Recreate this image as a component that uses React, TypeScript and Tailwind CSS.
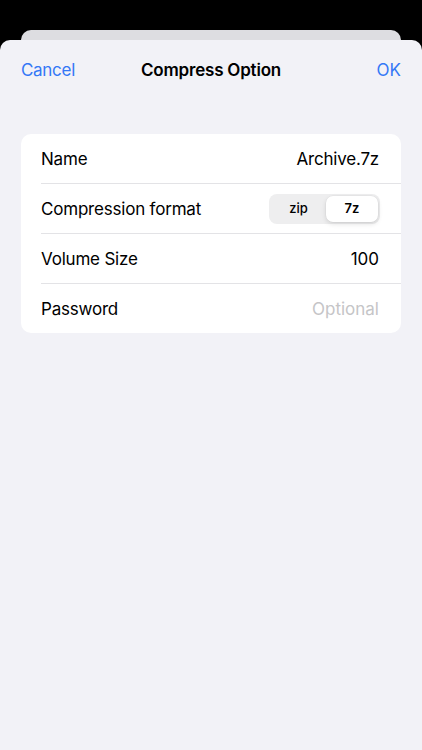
import React from "react";

export default function App() {
  const font = { fontFamily: "Inter, 'Liberation Sans', sans-serif" };
  return (
    <div className="w-[422px] h-[750px] bg-black overflow-hidden flex flex-col" style={font}>
      <div className="h-[30px] shrink-0" />
      <div className="mx-[21px] h-[10px] shrink-0 rounded-t-[10px] bg-[#dddde1]" />
      <div className="flex-1 rounded-t-[10px] bg-[#f2f2f7] flex flex-col">
        <div className="h-[59px] grid grid-cols-[1fr_auto_1fr] items-center px-[21px] pt-[3px]">
          <span className="justify-self-start text-[17px] text-[#3478f6] tracking-[-0.3px]">Cancel</span>
          <span className="text-[17px] font-semibold text-black tracking-[-0.2px]">Compress Option</span>
          <span className="justify-self-end text-[17px] text-[#3478f6]">OK</span>
        </div>
        <div className="mt-[35px] mx-[21px] bg-white rounded-[10px] overflow-hidden">
          <Row label="Name">
            <span className="text-[17px] text-black tracking-[-0.2px]">Archive.7z</span>
          </Row>
          <Divider />
          <Row label="Compression format">
            <div className="w-[111px] h-[30px] rounded-[8px] bg-[#eeeeef] p-[2px] flex -mr-[1px] -mt-[1px]">
              <div className="flex-1 flex items-center justify-center text-[13px] font-medium text-black">zip</div>
              <div className="w-[52px] rounded-[7px] bg-white shadow-[0_2px_5px_rgba(0,0,0,0.12),0_0_0_0.5px_rgba(0,0,0,0.04)] flex items-center justify-center text-[13px] font-semibold text-black">
                7z
              </div>
            </div>
          </Row>
          <Divider />
          <Row label="Volume Size">
            <span className="text-[17px] text-black">100</span>
          </Row>
          <Divider />
          <Row label="Password">
            <span className="text-[17px] text-[#c5c5c7]">Optional</span>
          </Row>
        </div>
      </div>
    </div>
  );
}

function Row({ label, children }: { label: string; children: React.ReactNode }) {
  return (
    <div className="h-[49px] flex items-center justify-between pl-[20px] pr-[22px] pt-[2px]">
      <span className="text-[17px] text-black tracking-[-0.2px]">{label}</span>
      {children}
    </div>
  );
}

function Divider() {
  return <div className="ml-[20px] h-px bg-[#e3e3e6]" />;
}
